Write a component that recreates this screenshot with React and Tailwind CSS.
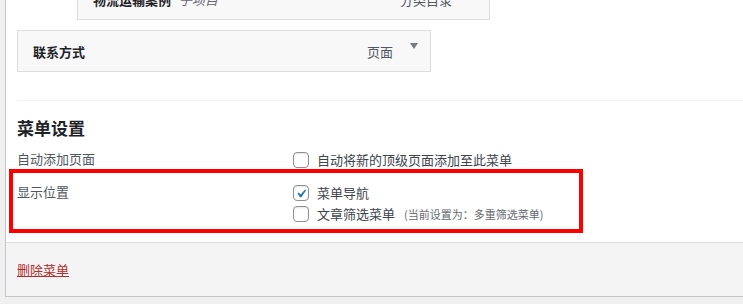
import React from 'react';

const Arrow = () => (
  <svg width="8" height="6" viewBox="0 0 8 6" className="block">
    <path d="M0 0 L8 0 L4 6 Z" fill="#787c82" />
  </svg>
);

const Checkbox = ({ checked }) => (
  <span className="relative flex h-4 w-4 shrink-0 items-center justify-center rounded-[4px] border border-[#8c8f94] bg-white shadow-[inset_0_1px_2px_rgba(0,0,0,0.1)]">
    {checked && (
      <svg width="16" height="16" viewBox="0 0 20 20" className="absolute -left-[1px] -top-[1px] h-[16px] w-[16px]">
        <path d="M14.83 4.89l1.34.94-5.81 8.38H9.02L5.78 9.67l1.34-1.25 2.57 2.4z" fill="#2271b1" transform="translate(-0.5 0.5) scale(1.05)" />
      </svg>
    )}
  </span>
);

const MenuItemBox = ({ title, sub, type, className }) => (
  <div className={`flex h-[42px] items-center justify-between border border-[#dcdcde] bg-[#f8f8f8] pl-[15px] pr-[12px] ${className}`}>
    <div className="flex items-center gap-[8px] pt-[2px]">
      <span className="text-[13px] font-bold text-[#1d2327]">{title}</span>
      {sub && <span className="text-[13px] italic text-[#646970]">{sub}</span>}
    </div>
    <div className="flex items-start gap-[17px]">
      <span className="pt-[2px] text-[13px] text-[#50575e]">{type}</span>
      <span className="pt-[3px]"><Arrow /></span>
    </div>
  </div>
);

const Option = ({ checked, label, note }) => (
  <label className="flex h-4 items-center gap-[8px]">
    <Checkbox checked={checked} />
    <span className="text-[13px] leading-[16px] text-[#3c434a]">{label}</span>
    {note && <span className="ml-[1px] text-[11px] leading-[16px] text-[#646970]">{note}</span>}
  </label>
);

export default function App() {
  return (
    <div className="h-[304px] w-[743px] overflow-hidden bg-[#f0f0f1] pl-[5px] font-['Noto_Sans_CJK_SC','Noto_Sans',sans-serif]">
      <div className="border-b border-l border-[#c3c4c7] bg-white">
        <div className="px-[11px] pb-[9px]">
          <MenuItemBox
            title="物流运输案例"
            sub="子项目"
            type="分类目录"
            className="-mt-[22px] ml-[60px] w-[413px]"
          />
          <MenuItemBox title="联系方式" type="页面" className="mt-[10px] w-[414px]" />

          <div className="mt-[28px] h-px w-[800px] bg-[#f0f0f1]" />

          <h3 className="mt-[16px] h-[22px] text-[17px] font-bold leading-[22px] text-[#1d2327]">菜单设置</h3>

          <div className="mt-[13px] flex">
            <div className="w-[276px] text-[13px] leading-[13px] text-[#50575e]">自动添加页面</div>
            <Option label="自动将新的顶级页面添加至此菜单" />
          </div>

          <div className="-ml-[8px] mt-[1px] flex w-[574px] border-4 border-[#ff0000] pb-[7px] pl-[4px]">
            <div className="w-[276px] pt-[13px] text-[13px] leading-[12px] text-[#50575e]">显示位置</div>
            <div className="flex flex-col gap-[5px] pt-[12px]">
              <Option checked label="菜单导航" />
              <Option label="文章筛选菜单" note="(当前设置为：多重筛选菜单)" />
            </div>
          </div>
        </div>

        <div className="flex h-[54px] items-center border-t border-[#dcdcde] bg-[#f4f4f4] px-[11px]">
          <a href="#" className="text-[13px] text-[#b32d2e] underline">删除菜单</a>
        </div>
      </div>
    </div>
  );
}
